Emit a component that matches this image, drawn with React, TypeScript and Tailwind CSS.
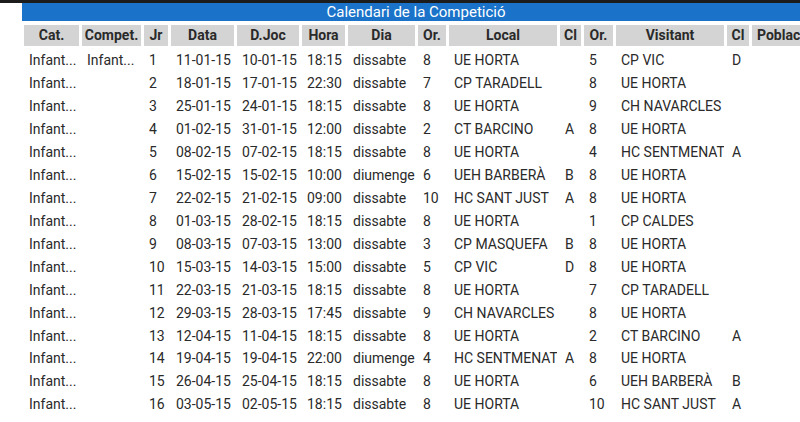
const columns = [
  { label: "Cat.", w: "w-[55px]" },
  { label: "Compet.", w: "w-[59px]" },
  { label: "Jr", w: "w-[24px]" },
  { label: "Data", w: "w-[63px]" },
  { label: "D.Joc", w: "w-[62px]" },
  { label: "Hora", w: "w-[43px]" },
  { label: "Dia", w: "w-[67px]" },
  { label: "Or.", w: "w-[28px]" },
  { label: "Local", w: "w-[108px]" },
  { label: "Cl", w: "w-[21px]" },
  { label: "Or.", w: "w-[29px]" },
  { label: "Visitant", w: "w-[108px]" },
  { label: "Cl", w: "w-[22px]" },
  { label: "Poblac", w: "w-[90px]" },
];

const rows: string[][] = [
  ["Infant...", "Infant...", "1", "11-01-15", "10-01-15", "18:15", "dissabte", "8", "UE HORTA", "", "5", "CP VIC", "D", ""],
  ["Infant...", "", "2", "18-01-15", "17-01-15", "22:30", "dissabte", "7", "CP TARADELL", "", "8", "UE HORTA", "", ""],
  ["Infant...", "", "3", "25-01-15", "24-01-15", "18:15", "dissabte", "8", "UE HORTA", "", "9", "CH NAVARCLES", "", ""],
  ["Infant...", "", "4", "01-02-15", "31-01-15", "12:00", "dissabte", "2", "CT BARCINO", "A", "8", "UE HORTA", "", ""],
  ["Infant...", "", "5", "08-02-15", "07-02-15", "18:15", "dissabte", "8", "UE HORTA", "", "4", "HC SENTMENAT", "A", ""],
  ["Infant...", "", "6", "15-02-15", "15-02-15", "10:00", "diumenge", "6", "UEH BARBERÀ", "B", "8", "UE HORTA", "", ""],
  ["Infant...", "", "7", "22-02-15", "21-02-15", "09:00", "dissabte", "10", "HC SANT JUST", "A", "8", "UE HORTA", "", ""],
  ["Infant...", "", "8", "01-03-15", "28-02-15", "18:15", "dissabte", "8", "UE HORTA", "", "1", "CP CALDES", "", ""],
  ["Infant...", "", "9", "08-03-15", "07-03-15", "13:00", "dissabte", "3", "CP MASQUEFA", "B", "8", "UE HORTA", "", ""],
  ["Infant...", "", "10", "15-03-15", "14-03-15", "15:00", "dissabte", "5", "CP VIC", "D", "8", "UE HORTA", "", ""],
  ["Infant...", "", "11", "22-03-15", "21-03-15", "18:15", "dissabte", "8", "UE HORTA", "", "7", "CP TARADELL", "", ""],
  ["Infant...", "", "12", "29-03-15", "28-03-15", "17:45", "dissabte", "9", "CH NAVARCLES", "", "8", "UE HORTA", "", ""],
  ["Infant...", "", "13", "12-04-15", "11-04-15", "18:15", "dissabte", "8", "UE HORTA", "", "2", "CT BARCINO", "A", ""],
  ["Infant...", "", "14", "19-04-15", "19-04-15", "22:00", "diumenge", "4", "HC SENTMENAT", "A", "8", "UE HORTA", "", ""],
  ["Infant...", "", "15", "26-04-15", "25-04-15", "18:15", "dissabte", "8", "UE HORTA", "", "6", "UEH BARBERÀ", "B", ""],
  ["Infant...", "", "16", "03-05-15", "02-05-15", "18:15", "dissabte", "8", "UE HORTA", "", "10", "HC SANT JUST", "A", ""],
];

export default function App() {
  return (
    <div className="w-[800px] h-[422px] overflow-hidden bg-white font-['Roboto',sans-serif] text-[#2a2a2a]">
      <div className="h-[3px] bg-[#1c1c1c]" />
      <div className="ml-[22px] h-[18px] bg-[#1a73c9] flex items-center justify-center pl-[10px] text-white text-[15px] leading-none">
        Calendari de la Competició
      </div>
      <div className="ml-[24px] mt-[4px] flex flex-col">
        <div className="flex gap-[3px] h-[21px]">
          {columns.map((c, i) => (
            <div
              key={i}
              className={`${c.w} shrink-0 bg-[#d4d4d4] flex items-center ${i === columns.length - 1 ? "justify-start pl-[5px]" : "justify-center"} text-[14px] font-bold whitespace-nowrap overflow-hidden`}
            >
              {c.label}
            </div>
          ))}
        </div>
        <div className="mt-[3.5px] flex flex-col">
          {rows.map((r, ri) => (
            <div key={ri} className="flex gap-[3px] h-[22.93px]">
              {r.map((cell, ci) => (
                <div
                  key={ci}
                  className={`${columns[ci].w} shrink-0 pl-[5px] flex items-center text-[14px] whitespace-nowrap overflow-hidden`}
                >
                  {cell}
                </div>
              ))}
            </div>
          ))}
        </div>
      </div>
    </div>
  );
}
